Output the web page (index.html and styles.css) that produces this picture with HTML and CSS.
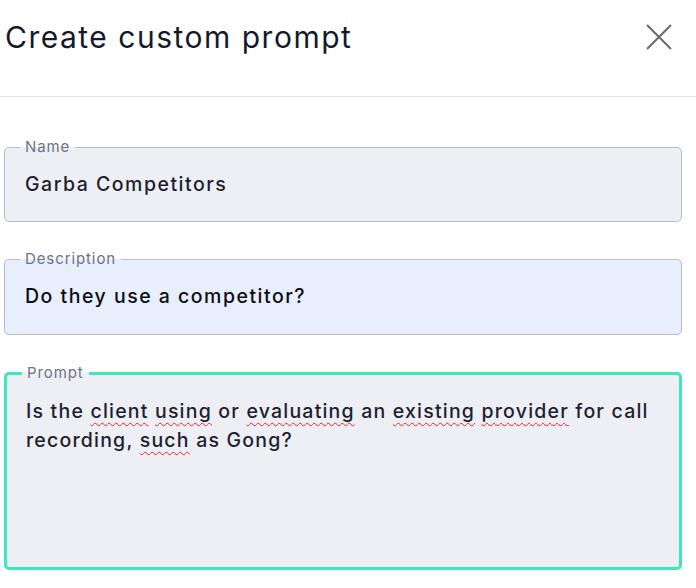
FILE: index.html
```html
<!DOCTYPE html>
<html lang="en">
<head>
<meta charset="utf-8">
<title>Create custom prompt</title>
<link rel="stylesheet" href="styles.css">
</head>
<body>
<div class="dialog">
  <header class="dialog-header">
    <h1 class="dialog-title">Create custom prompt</h1>
    <button class="close-btn" aria-label="Close">
      <svg width="26" height="26" viewBox="0 0 26 26"><path d="M1 1 L25 25 M25 1 L1 25" stroke="#6b6b6b" stroke-width="2" fill="none"/></svg>
    </button>
  </header>
  <main class="dialog-body">
    <fieldset class="field field-name">
      <legend class="field-label">Name</legend>
      <div class="field-value">Garba Competitors</div>
    </fieldset>
    <fieldset class="field field-desc">
      <legend class="field-label">Description</legend>
      <div class="field-value value-dark">Do they use a competitor?</div>
    </fieldset>
    <fieldset class="field field-prompt">
      <legend class="field-label">Prompt</legend>
      <div class="field-value prompt-text">Is the <span class="sp">client</span> <span class="sp">using</span> or <span class="sp">evaluating</span> an <span class="sp">existing</span> <span class="sp">provider</span> for call recording, <span class="sp">such</span> as Gong?</div>
    </fieldset>
  </main>
</div>
</body>
</html>
```
FILE: styles.css
```css
* { box-sizing: border-box; }
html, body { margin: 0; padding: 0; background: #ffffff; }
body {
  font-family: "Inter", "Open Sans", sans-serif;
  color: #161b2b;
  width: 696px;
  height: 588px;
  overflow: hidden;
}
.dialog-header {
  height: 97px;
  border-bottom: 1px solid #e3e4e8;
  display: flex;
  align-items: flex-start;
  justify-content: space-between;
  padding: 0 24px 0 5px;
}
.dialog-title {
  margin: 17px 0 0 0;
  font-size: 30px;
  font-weight: 400;
  line-height: 40px;
  color: #141a2b;
  letter-spacing: 1.5px;
}
.close-btn {
  margin-top: 24px;
  width: 26px;
  height: 26px;
  padding: 0;
  border: 0;
  background: transparent;
  display: flex;
}
.dialog-body {
  padding: 41px 14px 0 4px;
  display: flex;
  flex-direction: column;
  gap: 28px;
}
.field {
  margin: 0;
  padding: 0 20px;
  min-width: 0;
  border: 1px solid #b9bdc7;
  border-radius: 5px;
  background: #eeeff4;
}
.field-label {
  margin-left: -5px;
  padding: 0 5px;
  font-size: 15px;
  line-height: 18px;
  color: #6b7384;
  letter-spacing: 0.9px;
}
.field-name { height: 84px; }
.field-desc { height: 85px; background: #e8effc; }
.field-prompt {
  height: 206px;
  border: 3px solid #3ee8b8;
  padding: 0 19px;
  margin-top: 1px;
}
.field-prompt .field-label { margin-left: -4px; }
.field-value {
  font-size: 19.5px;
  font-weight: 450;
  line-height: 28px;
  padding-top: 14px;
  color: #1c2130;
  letter-spacing: 1.5px;
}
.value-dark { color: #0b0d14; }
.prompt-text {
  padding-top: 15px;
  line-height: 29px;
  letter-spacing: 1.2px;
}
.sp {
  text-decoration: underline wavy #e8242b;
  text-decoration-thickness: 1px;
  text-underline-offset: 4px;
}
```
